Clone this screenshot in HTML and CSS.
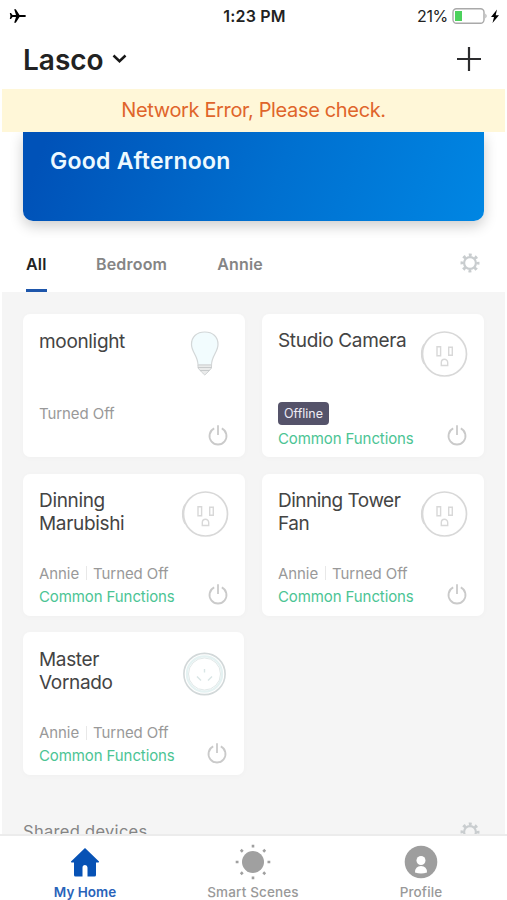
FILE: index.html
```html
<!DOCTYPE html>
<html lang="en">
<head>
<meta charset="utf-8">
<title>My Home</title>
<link rel="stylesheet" href="styles.css">
</head>
<body>
<svg class="defs" width="0" height="0">
  <symbol id="power" viewBox="0 0 22 22"><path d="M7.200 4.400a8.500 8.500 0 1 0 7.600 0M11 1.200v9.800" fill="none" stroke="#cacaca" stroke-width="1.800"/></symbol>
  <symbol id="gear" viewBox="0 0 20 20"><g fill="none" stroke="#c9cdcf"><circle cx="10" cy="10" r="5.900" stroke-width="2.200"/><circle cx="10" cy="10" r="8" stroke-width="3" stroke-dasharray="2.900 3.383" stroke-dashoffset="1.450"/></g></symbol>
  <symbol id="outlet" viewBox="0 0 48 48"><g fill="none" stroke="#d8d8d8"><path d="M4.500 15Q1.500 18 1.500 25T4.500 35" stroke-width="1.200"/><circle cx="24.500" cy="25" r="22" stroke-width="1.700"/><path d="M17 17.800h3.600v9H17zM28.700 18.300h3.600v8h-3.600zM21.300 36.500v-3a3.200 3.200 0 0 1 6.400 0v3z" stroke-width="1.400"/></g></symbol>
</svg>
<div class="app">
  <header class="status">
    <svg class="plane" width="18" height="16" viewBox="0 0 18 16"><path d="M17 8c0-.7-1-1-2-1h-4.500L6.800 1.200H5.200L7 7H3.500L2 5H.8l.6 3-.6 3H2l1.500-2H7l-1.800 5.800h1.600L10.500 9H15c1 0 2-.3 2-1z"/></svg>
    <span class="time">1:23 PM</span>
    <span class="power-state"><span>21%</span>
      <svg width="48" height="18" viewBox="0 0 48 18"><rect x="1" y="1.700" width="31" height="14.500" rx="3.500" fill="#fff" stroke="#a9a9a9" stroke-width="1.400"/><path d="M33.500 6.500q2 2.500 0 5z" fill="#999"/><path d="M3 4h7v10H3z" fill="#4cd15c"/><path d="M45 2.500 39 10h3L40.500 16l6.500-7.800h-3.300z"/></svg>
    </span>
  </header>
  <div class="topbar">
    <h1>Lasco</h1>
    <svg width="15" height="10" viewBox="0 0 15 10"><path d="M1.500 1.500 7.500 7.200l6-5.700" fill="none" stroke="#181818" stroke-width="2.500"/></svg>
    <svg class="add" width="26" height="26" viewBox="0 0 26 26"><path d="M13 1v24M1 13h24" stroke="#2c2c2e" stroke-width="2.200"/></svg>
  </div>
  <div class="alert">Network Error, Please check.</div>
  <div class="hero-wrap"><section class="hero">Good Afternoon</section></div>
  <nav class="tabs">
    <a class="tab active">All</a><a class="tab bedroom">Bedroom</a><a class="tab annie">Annie</a>
    <svg class="gear" width="20" height="20"><use href="#gear"/></svg>
  </nav>
  <main class="content">
    <div class="grid">
      <article class="card single">
        <h2>moonlight</h2>
        <svg class="device" width="48" height="48" viewBox="0 0 48 48"><path d="M18 36c0-9-6.500-13-6.500-20.500C11.500 7.500 17 3 24.800 3S38 7.500 38 15.500C38 23 31.500 27 31.500 36z" fill="#f2fcfe" stroke="#d3d7d8" stroke-width="1.200"/><path d="M18 36h13.500v3L28 43l-3.200 3L21.500 43 18 39z" fill="#eaebeb" stroke="#d0d3d4"/><path d="M18 38.500h13.500M20 41.500h9.500" stroke="#c8cbcc"/></svg>
        <p class="state">Turned Off</p>
        <svg class="switch" width="22" height="22"><use href="#power"/></svg>
      </article>
      <article class="card single">
        <h2>Studio Camera</h2>
        <svg class="device" width="48" height="48"><use href="#outlet"/></svg>
        <p class="offline">Offline</p><p class="functions">Common Functions</p>
        <svg class="switch" width="22" height="22"><use href="#power"/></svg>
      </article>
      <article class="card">
        <h2>Dinning<br>Marubishi</h2>
        <svg class="device" width="48" height="48"><use href="#outlet"/></svg>
        <p class="state"><span class="room">Annie</span><span>Turned Off</span></p><p class="functions">Common Functions</p>
        <svg class="switch" width="22" height="22"><use href="#power"/></svg>
      </article>
      <article class="card">
        <h2 class="tight">Dinning Tower<br>Fan</h2>
        <svg class="device" width="48" height="48"><use href="#outlet"/></svg>
        <p class="state"><span class="room">Annie</span><span>Turned Off</span></p><p class="functions">Common Functions</p>
        <svg class="switch" width="22" height="22"><use href="#power"/></svg>
      </article>
      <article class="card last">
        <h2>Master<br>Vornado</h2>
        <svg class="device" width="48" height="48" viewBox="0 0 48 48"><g fill="none"><circle cx="24.500" cy="26" r="20.600" stroke="#d2d8d9" stroke-width="1.600"/><circle cx="24.500" cy="26" r="17.600" stroke="#e5f2f2" stroke-width="2.200"/><circle cx="24.500" cy="26" r="16" stroke="#d9e2e2" stroke-width=".8"/><path d="M24.500 21v3.500M17 28.500l4 4M32 28.500l-4 4" stroke="#d8e5e5" stroke-width="1.400"/></g></svg>
        <p class="state"><span class="room">Annie</span><span>Turned Off</span></p><p class="functions">Common Functions</p>
        <svg class="switch" width="22" height="22"><use href="#power"/></svg>
      </article>
    </div>
    <div class="shared"><span>Shared devices</span><svg width="20" height="20"><use href="#gear"/></svg></div>
  </main>
  <footer class="nav">
    <a class="nav-item current"><svg width="36" height="36" viewBox="0 0 36 36"><path d="M18 4 32 17.500q.5 1-1 1h-2V31q0 1.500-1.500 1.500H20.500V23.500a2.500 2.500 0 0 0-5 0v9H8.500Q7 32.500 7 31V18.500H5q-1.500 0-1-1z" fill="#0752b5"/></svg><span>My Home</span></a>
    <a class="nav-item scenes"><svg width="36" height="36" viewBox="0 0 36 36"><circle cx="18" cy="18" r="11" fill="#a0a0a0"/><g stroke="#a0a0a0" stroke-width="2.600"><path id="rays" d="M18 .7v2.800M18 32.500v2.800M.7 18h2.800M32.500 18h2.800"/><use href="#rays" transform="rotate(45 18 18)"/></g></svg><span>Smart Scenes</span></a>
    <a class="nav-item profile"><svg width="36" height="36" viewBox="0 0 36 36"><circle cx="18" cy="18" r="16.300" fill="#9e9e9e"/><circle cx="18" cy="16.500" r="4.500" fill="#fff"/><path d="M12 28.500q0-6.500 6-6.500t6 6.500q-6 2-12 0z" fill="#fff"/></svg><span>Profile</span></a>
  </footer>
</div>
</body>
</html>
```
FILE: styles.css
```css
* { box-sizing: border-box; }
body { margin: 0; background: #fff; font-family: Inter, "Liberation Sans", sans-serif; color: #222; }
h1, h2, p { margin: 0; font-weight: 400; }
svg { display: block; flex: none; }
.defs { position: absolute; }
.app { width: 507px; height: 900px; overflow: hidden; display: flex; flex-direction: column; }
.status { height: 32px; display: grid; grid-template-columns: 1fr auto 1fr; align-items: center; padding: 0 7px 0 9px; }
.time { font-size: 16px; font-weight: 600; letter-spacing: .2px; }
.power-state { display: flex; justify-content: flex-end; align-items: center; gap: 4px; font-size: 16px; letter-spacing: -.3px; }
.topbar { height: 57px; display: flex; align-items: center; padding: 0 25px 3px 23px; }
h1 { font-size: 28px; font-weight: 600; letter-spacing: 0; margin: 1px 8px 0 0; }
.add { margin-left: auto; }
.alert { height: 43px; margin: 0 2px; background: #fff7d8; color: #df652b; font-size: 20px; line-height: 43px; text-align: center; letter-spacing: -.35px; white-space: nowrap; }
.hero-wrap { height: 106px; padding: 0 23px; overflow: hidden; flex: none; }
.hero { height: 89px; border-radius: 0 0 10px 10px; padding: 14px 27px; background: linear-gradient(110deg, #0052b8 5%, #0070d0 55%, #0086e3); box-shadow: 0 5px 14px rgba(0,0,0,.2); color: #edf9ff; font-size: 23px; line-height: 30px; font-weight: 600; letter-spacing: .25px; }
.tabs { height: 54px; display: flex; padding: 0 27px 0 26px; font-size: 16px; font-weight: 600; letter-spacing: .18px; color: #858585; }
.tab { line-height: 52px; height: 54px; }
.tab.active { color: #222; border-bottom: 3px solid #1e56ab; width: 21px; }
.bedroom { margin-left: 49px; }
.annie { margin-left: 50px; }
.gear { margin: 15px 0 0 auto; }
.content { flex: 1; min-height: 0; overflow: hidden; margin: 0 2px; padding: 22px 21px 0; background: #f5f5f5; }
.grid { display: grid; grid-template-columns: 222px 222px; grid-template-rows: 143px 142px 143px; row-gap: 16.500px; column-gap: 17px; }
.card { background: #fff; border-radius: 7px; padding: 15px 16px 9px; display: grid; grid-template-columns: 1fr 48px; grid-template-rows: 75px 23px 1fr; box-shadow: 0 1px 6px rgba(0,0,0,.025); }
.single { grid-template-rows: 75px 25px 1fr; }
.card.last { width: 221px; padding-top: 16px; }
h2 { font-size: 19px; line-height: 23px; letter-spacing: -.33px; color: #444; white-space: nowrap; grid-area: 1 / 1; }
h2.tight { letter-spacing: -.5px; }
.single:first-child h2 { padding-top: 1px; }
.device { grid-area: 1 / 2; }
.single:first-child .device { margin-left: -1px; }
.state { grid-area: 2 / 1; display: flex; align-items: flex-start; font-size: 15px; line-height: 19px; letter-spacing: -.08px; color: #999; white-space: nowrap; }
.room { display: flex; align-items: center; gap: 7px; margin-right: 6px; }
.room::after { content: ""; height: 14px; border-right: 1px solid #e8e8e8; }
.functions { grid-area: 3 / 1; font-size: 15px; line-height: 19px; letter-spacing: -.1px; color: #4bc494; white-space: nowrap; }
.offline { grid-area: 2 / 1; justify-self: start; width: 51px; height: 23px; margin-top: -2px; background: #55536a; border-radius: 4px; color: #eeecf5; font-size: 12.500px; line-height: 23px; text-align: center; }
.switch { grid-area: 3 / 2; justify-self: end; align-self: start; margin-top: -4px; }
.single .switch { margin-top: -5px; }
.shared { display: flex; justify-content: space-between; align-items: center; height: 22px; margin-top: 45px; padding-right: 4px; font-size: 16.500px; letter-spacing: .3px; color: #858585; }
.shared svg { margin-top: 2px; }
.nav { height: 66px; border-top: 2px solid #ececec; display: grid; grid-template-columns: repeat(3, 168px); justify-content: center; padding-right: 1px; }
.nav-item { display: flex; flex-direction: column; align-items: center; gap: 4px; padding-top: 8px; font-size: 13.500px; line-height: 17px; font-weight: 500; letter-spacing: .15px; color: #999; }
.current { color: #2863b9; font-weight: 600; letter-spacing: 0; }
```
